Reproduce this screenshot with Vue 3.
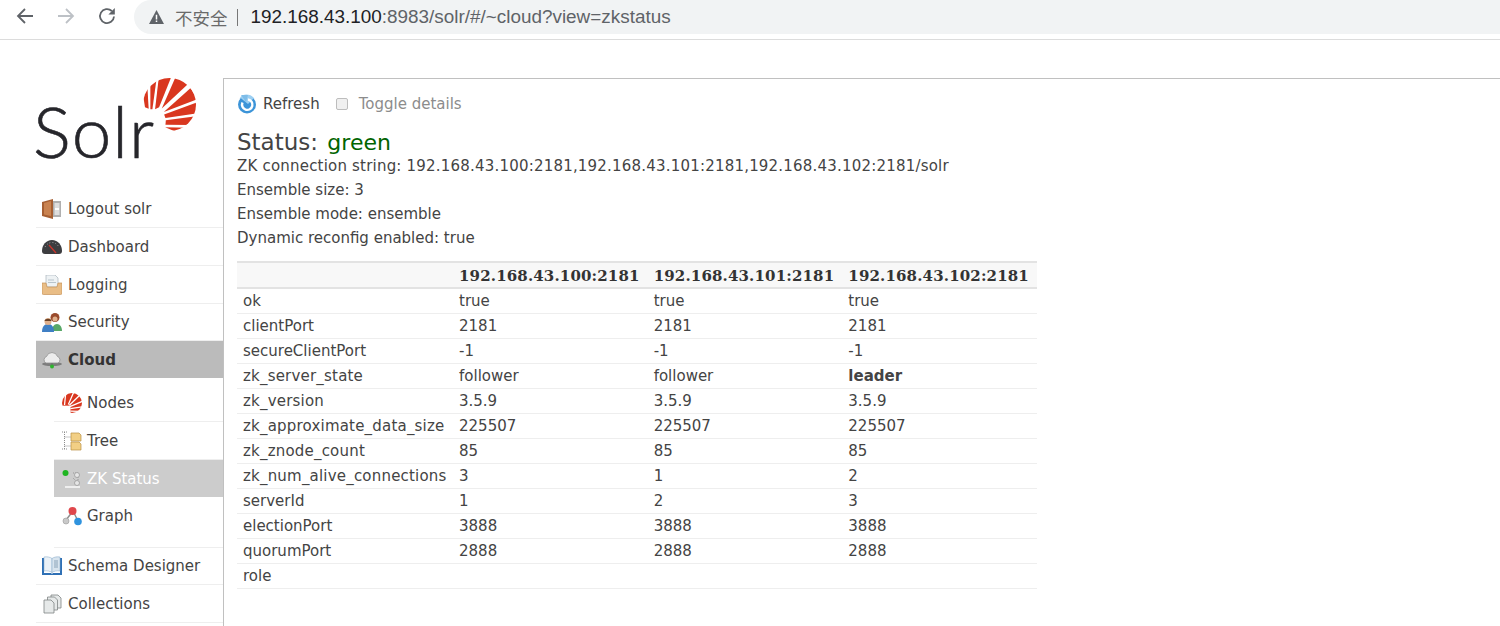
<template>
  <div class="page">
    <header class="chrome">
      <svg class="nav-ico" viewBox="0 0 18 18"><path d="M17 9H2M9 2 2 9l7 7" fill="none" stroke="#5f6368" stroke-width="1.8"/></svg>
      <svg class="nav-ico" viewBox="0 0 18 18"><path d="M1 9h15M9 2l7 7-7 7" fill="none" stroke="#bdc1c6" stroke-width="1.8"/></svg>
      <svg class="nav-ico" viewBox="0 0 18 18"><path d="M16 9.500A7 7 0 1 1 13.800 4" fill="none" stroke="#5f6368" stroke-width="1.8"/><path d="M16.800 1v6.400h-6.400z" fill="#5f6368"/></svg>
      <div class="omnibox">
        <svg class="warn" viewBox="0 0 14 13"><path d="M7 0 14 13H0z" fill="#5f6368"/><path d="M6.300 4.500h1.400v4.300H6.300zM6.300 9.800h1.400v1.400H6.300z" fill="#fff"/></svg>
        <span class="insecure">不安全</span>
        <span class="sep"></span>
        <span class="url"><b>192.168.43.100</b>:8983/solr/#/~cloud?view=zkstatus</span>
      </div>
    </header>

    <div class="body">
      <aside class="side">
        <div class="logo">
          <span class="logo-text">Solr</span>
          <svg class="logo-sun" viewBox="370 25 158 158">
            <defs><clipPath id="sun"><circle cx="449" cy="104" r="79"/></clipPath></defs>
            <g clip-path="url(#sun)" fill="#d9371f">
              <polygon v-for="w in rays" :key="w" :points="w"/>
            </g>
          </svg>
        </div>
        <ul class="menu">
          <li class="item">
            <svg class="ico" viewBox="0 0 20 20"><path d="M0 3 11 0v20L0 17z" fill="#a65f33"/><path d="M2 4l7-2v15l-7-1.500z" fill="#c98250"/><path d="M11 2h8v16h-8z" fill="#b0b0b0"/><path d="M12.500 4h5v12h-5z" fill="#dedede"/><path d="M13 10h4" stroke="#fff" stroke-width="2"/></svg>
            <span>Logout solr</span>
          </li>
          <li class="item">
            <svg class="ico" viewBox="0 0 20 20"><path d="M0 14C0 8 4 3 10 3s10 5 10 11c0 2-1 3-3 3H3c-2 0-3-1-3-3z" fill="#3d3d40"/><path d="M3 10C5 7 7 5.500 10 5.500s5 1.500 7 4.500" fill="none" stroke="#9a9a9e" stroke-dasharray="1 2"/><path d="M7 8l7 8" stroke="#c9352b" stroke-width="1.400"/></svg>
            <span>Dashboard</span>
          </li>
          <li class="item">
            <svg class="ico" viewBox="0 0 20 20"><path d="M4 0h9l3 3v9H4z" fill="#eef2f4" stroke="#a9b4bb" stroke-width=".7"/><path d="M6 5h6M6 7.500h8" stroke="#b8c4cc"/><path d="M0 8h4l1 4h10l1-4h4v10a1.500 1.500 0 0 1-1.500 1.500h-17A1.500 1.500 0 0 1 0 18z" fill="#e9bd86" stroke="#c69259" stroke-width=".7"/></svg>
            <span>Logging</span>
          </li>
          <li class="item short">
            <svg class="ico" viewBox="0 0 20 20"><path d="M10 19c0-4 2-7 5-7s5 3 5 7z" fill="#58a868"/><circle cx="13" cy="5.500" r="4.500" fill="#9a4b2c"/><circle cx="13" cy="7" r="2.500" fill="#e0b08c"/><path d="M0 20c0-5 2-8 6-8s6 3 6 8z" fill="#3f7fc4"/><circle cx="6" cy="9.500" r="3.500" fill="#e0b08c"/><path d="M2.500 9C3 6 9 6 9.500 9z" fill="#6b4226"/></svg>
            <span>Security</span>
          </li>
          <li class="item cloud">
            <svg class="ico" viewBox="0 0 20 20"><ellipse cx="10" cy="14" rx="10" ry="2" fill="#7d7d7d"/><path d="M4 13a3.500 3.500 0 0 1 .5-6.500 5.800 5.800 0 0 1 11 0 3.500 3.500 0 0 1 .5 6.500z" fill="#ececec" stroke="#8f8f8f" stroke-width=".8"/><path d="M10 13v3" stroke="#6f6f6f"/><circle cx="10" cy="16.500" r="2" fill="#2fb52f"/></svg>
            <span>Cloud</span>
          </li>
        </ul>
        <ul class="sub">
          <li class="item">
            <svg class="ico" viewBox="370 25 158 158"><circle cx="449" cy="104" r="79" fill="#d9371f"/><path d="M462 20 420 115M508 45 428 122M532 90 432 132M530 135 436 148M510 170 436 168M400 20 390 120" stroke="#fff" stroke-width="10"/><path d="M365 125h72v65h-72z" fill="#fff"/></svg>
            <span>Nodes</span>
          </li>
          <li class="item">
            <svg class="ico" viewBox="0 0 20 20"><path d="M2.500 1v17M2.500 6h7M2.500 15h7M0 1h5M0 18h5" fill="none" stroke="#8d8d8d" stroke-dasharray="1 1"/><path d="M9 2h8l2 2v6H9z" fill="#f2cf85" stroke="#b98f45" stroke-width=".7"/><path d="M9 11h8l2 2v6H9z" fill="#f2cf85" stroke="#b98f45" stroke-width=".7"/></svg>
            <span>Tree</span>
          </li>
          <li class="item current">
            <svg class="ico" viewBox="0 0 20 20"><circle cx="3.500" cy="4" r="3" fill="#1fb521"/><path d="M11 4h5M16 4v10M11 9l5 5" fill="none" stroke="#999" stroke-dasharray="1 1"/><path d="M3 18h15" stroke="#efefef" stroke-width="2"/><circle cx="15" cy="6" r="2.500" fill="#e6e6e6" stroke="#9a9a9a" stroke-width=".8"/><circle cx="15" cy="14" r="2.500" fill="#e6e6e6" stroke="#9a9a9a" stroke-width=".8"/></svg>
            <span>ZK Status</span>
          </li>
          <li class="item">
            <svg class="ico" viewBox="0 0 20 20"><path d="M11 5 4 14M11 5l5 10" stroke="#8d8d8d" stroke-width="1.400"/><circle cx="4" cy="15" r="3" fill="#c9c9c9" stroke="#999" stroke-width=".6"/><circle cx="10.500" cy="5" r="4" fill="#e0474c"/><circle cx="16" cy="15.500" r="3.800" fill="#2f93de"/></svg>
            <span>Graph</span>
          </li>
        </ul>
        <ul class="menu rest">
          <li class="item short">
            <svg class="ico" viewBox="0 0 20 20"><path d="M0 2h2v15h7l1 1 1-1h7V2h2v17H0z" fill="#2f70b5"/><path d="M2 1c3-.500 6 0 8 1.500v14C8 15 5 14.500 2 15z" fill="#eaf1f7" stroke="#7ea4c6" stroke-width=".5"/><path d="M18 1c-3-.500-6 0-8 1.500v14c2-1.500 5-2 8-1.500z" fill="#d8e4ee" stroke="#7ea4c6" stroke-width=".5"/><path d="M12 5h4M12 7h4M12 9h4M12 11h4" stroke="#8aa3b8"/></svg>
            <span>Schema Designer</span>
          </li>
          <li class="item">
            <svg class="ico" viewBox="0 0 20 20"><g fill="#e6e9e9" stroke="#7f8484" stroke-width=".8"><path d="M9 1h7l3 3v10H9z"/><path d="M5.500 3h7l3 3v10h-10z"/><path d="M2 6h7l3 3v10H2z"/></g></svg>
            <span>Collections</span>
          </li>
        </ul>
      </aside>

      <main class="content">
        <div class="actions">
          <span class="action">
            <svg class="refresh" viewBox="0 0 20 20"><circle cx="10" cy="10.500" r="9" fill="#3c94d8"/><path d="M3 3.500C6-.500 13-.500 17 4l-6 6z" fill="#9ccff2"/><path d="M11 5.500a5.200 5.200 0 1 1-5.500 3" fill="none" stroke="#fff" stroke-width="2.400"/><path d="M4 1h7L9 8z" fill="#7dbce8"/></svg>
            Refresh
          </span>
          <span class="action toggle"><i class="check"></i>Toggle details</span>
        </div>
        <h2 class="status">Status: <span>green</span></h2>
        <p class="line conn">ZK connection string: 192.168.43.100:2181,192.168.43.101:2181,192.168.43.102:2181/solr</p>
        <p class="line">Ensemble size: 3</p>
        <p class="line">Ensemble mode: ensemble</p>
        <p class="line">Dynamic reconfig enabled: true</p>
        <table class="zk">
          <thead>
            <tr>
              <th class="key"></th>
              <th v-for="h in hosts" :key="h">{{ h }}</th>
            </tr>
          </thead>
          <tbody>
            <tr v-for="r in rows" :key="r[0]">
              <td class="key" :class="{ under: r[0].includes('_') }">{{ r[0] }}</td>
              <td v-for="(v, i) in r.slice(1)" :key="i" :class="{ leader: v === 'leader' }">{{ v }}</td>
            </tr>
          </tbody>
        </table>
      </main>
    </div>
  </div>
</template>

<script setup>
const rays = [
  '370,75 383,52 387,117 376,112',
  '392,44 410,30 398,118 392,118',
  '417,24 455,20 418,112 406,118',
  '468,20 505,42 426,116',
  '512,55 532,88 432,126',
  '532,97 532,130 437,144 433,134',
  '530,139 512,165 437,164 438,151',
  '505,173 470,186 436,172',
]

const hosts = ['192.168.43.100:2181', '192.168.43.101:2181', '192.168.43.102:2181']

const rows = [
  ['ok', 'true', 'true', 'true'],
  ['clientPort', '2181', '2181', '2181'],
  ['secureClientPort', '-1', '-1', '-1'],
  ['zk_server_state', 'follower', 'follower', 'leader'],
  ['zk_version', '3.5.9', '3.5.9', '3.5.9'],
  ['zk_approximate_data_size', '225507', '225507', '225507'],
  ['zk_znode_count', '85', '85', '85'],
  ['zk_num_alive_connections', '3', '1', '2'],
  ['serverId', '1', '2', '3'],
  ['electionPort', '3888', '3888', '3888'],
  ['quorumPort', '2888', '2888', '2888'],
  ['role', '', '', ''],
]
</script>

<style>
html, body {
  margin: 0;
  background: #fff;
  overflow: hidden;
}
</style>

<style scoped>
.page {
  height: 626px;
  overflow: hidden;
  font-family: "DejaVu Sans", Verdana, sans-serif;
  font-size: 15px;
  color: #333;
}

.chrome {
  height: 39px;
  display: flex;
  align-items: flex-start;
  padding-left: 16px;
  border-bottom: 1px solid #dcdcdc;
}
.nav-ico {
  width: 18px;
  height: 18px;
  margin: 7px 23px 0 0;
}
.nav-ico:nth-child(3) {
  margin-right: 18px;
}
.omnibox {
  flex: 1;
  height: 34px;
  background: #f1f3f4;
  border-radius: 17px 0 0 17px;
  display: flex;
  align-items: center;
  padding-left: 15px;
  font-family: "Liberation Sans", "Noto Sans CJK SC", sans-serif;
  font-size: 18.9px;
  color: #5f6368;
}
.warn {
  width: 15px;
  height: 14px;
  margin-right: 12px;
}
.insecure {
  font-family: "Noto Sans CJK SC", sans-serif;
  font-size: 17.5px;
  color: #6a6a6a;
  margin-left: -1px;
}
.sep {
  width: 1px;
  height: 17px;
  background: #777;
  margin: 0 13px 0 9px;
}
.url b {
  font-weight: 400;
  color: #202124;
}

.body {
  display: flex;
  padding-top: 38px;
  height: 549px;
}
.side {
  width: 187px;
  margin-left: 36px;
  flex: none;
}
.logo {
  position: relative;
  height: 112px;
}
.logo-text {
  position: absolute;
  left: -3px;
  top: 10px;
  font-family: Lato, sans-serif;
  font-weight: 300;
  font-size: 71px;
  line-height: 86px;
  letter-spacing: 1px;
  color: #26262b;
  -webkit-text-stroke: 0.6px #26262b;
}
.logo-sun {
  position: absolute;
  left: 107px;
  top: 0;
  width: 53px;
  height: 53px;
}
.menu,
.sub {
  list-style: none;
  margin: 0;
  padding: 0;
}
.item {
  height: 37px;
  display: flex;
  align-items: center;
  gap: 6px;
  padding-left: 6px;
  border-bottom: 1px solid #eee;
  color: #444;
}
.short {
  height: 36px;
}
.ico {
  width: 20px;
  height: 20px;
  flex: none;
}
.cloud {
  background: #bbb;
  border-bottom: 0;
  font-weight: 700;
  color: #333;
}
.sub {
  margin: 6px 0 0 18px;
  padding-bottom: 13px;
  border-bottom: 1px solid #eee;
}
.sub .item {
  padding-left: 8px;
  gap: 5px;
}
.sub .item:last-child {
  border-bottom: 0;
}
.sub .current {
  background: #ccc;
  color: #fff;
  border-bottom: 0;
}

.content {
  flex: 1;
  border-left: 1px solid #c0c0c0;
  border-top: 1px solid #c0c0c0;
  padding: 13px 13px;
}
.actions {
  display: flex;
  gap: 16px;
  height: 24px;
  align-items: center;
}
.action {
  display: flex;
  align-items: center;
  gap: 6px;
  color: #444;
}
.toggle {
  color: #8c8c8c;
}
.refresh {
  width: 20px;
  height: 20px;
}
.check {
  width: 10px;
  height: 10px;
  border: 1px solid #bdbdbd;
  border-radius: 2px;
  background: #f0f0f0;
  margin-right: 5px;
}
.status {
  margin: 15px 0 0;
  font-size: 23px;
  font-weight: 400;
  line-height: 23px;
  word-spacing: 2px;
  color: #444;
}
.status span {
  color: #006400;
  font-size: 22px;
}
.line {
  margin: 0;
  line-height: 24px;
  color: #444;
}
.conn {
  letter-spacing: 0.2px;
}
.zk {
  margin-top: 11px;
  border-collapse: collapse;
  border-top: 2px solid #e3e3e3;
  table-layout: fixed;
  width: 800px;
}
.zk th {
  height: 23px;
  padding: 1px 0 0 6px;
  background: #f8f8f8;
  border-bottom: 2px solid #e3e3e3;
  text-align: left;
  font-family: "DejaVu Serif", serif;
  font-size: 15px;
  letter-spacing: 0.15px;
  color: #333;
}
.zk td {
  height: 24px;
  padding: 0 0 0 6px;
  border-bottom: 1px solid #eee;
  color: #444;
}
.zk .key {
  width: 210px;
}
.zk .under {
  letter-spacing: 0.2px;
}
.leader {
  font-weight: 700;
}
</style>
